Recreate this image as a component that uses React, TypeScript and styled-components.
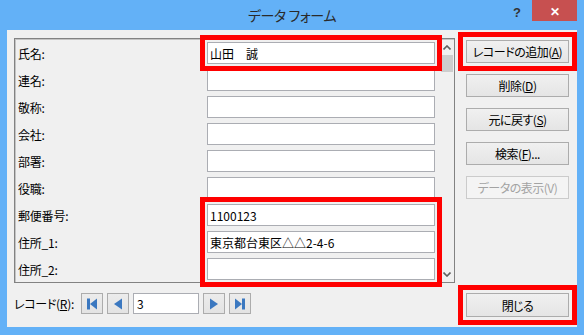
import styled, { createGlobalStyle } from 'styled-components';

const GlobalStyle = createGlobalStyle`
  html, body {
    margin: 0;
    padding: 0;
    background: #ffffff;
  }
  body {
    font-family: "Noto Sans CJK JP", "Noto Sans", sans-serif;
    font-size: 12px;
    font-feature-settings: "palt";
    color: #000000;
  }
`;

type Field = { label: string; value: string };

const fields: Field[] = [
  { label: '氏名:', value: '山田　誠' },
  { label: '連名:', value: '' },
  { label: '敬称:', value: '' },
  { label: '会社:', value: '' },
  { label: '部署:', value: '' },
  { label: '役職:', value: '' },
  { label: '郵便番号:', value: '1100123' },
  { label: '住所_1:', value: '東京都台東区△△2-4-6' },
  { label: '住所_2:', value: '' },
];

const Chevron = ({ up }: { up?: boolean }) => (
  <svg width="8" height="5" viewBox="0 0 8 5">
    <path
      d={up ? 'M0.5 4.5 L4 1 L7.5 4.5' : 'M0.5 0.5 L4 4 L7.5 0.5'}
      fill="none"
      stroke="#606060"
      strokeWidth="1.6"
    />
  </svg>
);

const NavIcon = ({ kind }: { kind: 'first' | 'prev' | 'next' | 'last' }) => (
  <svg width="12" height="12" viewBox="0 0 12 12">
    {kind === 'first' && (
      <>
        <rect x="1" y="0.5" width="3" height="11" fill="#3b78c0" />
        <path d="M4 6 L11 0.5 L11 11.5 Z" fill="#3b78c0" />
      </>
    )}
    {kind === 'prev' && <path d="M2 6 L10 0.5 L10 11.5 Z" fill="#3b78c0" />}
    {kind === 'next' && <path d="M10 6 L2 0.5 L2 11.5 Z" fill="#3b78c0" />}
    {kind === 'last' && (
      <>
        <path d="M8 6 L1 0.5 L1 11.5 Z" fill="#3b78c0" />
        <rect x="8" y="0.5" width="3" height="11" fill="#3b78c0" />
      </>
    )}
  </svg>
);

export default function App() {
  return (
    <>
      <GlobalStyle />
      <Window>
        <TitleBar>
          <span />
          <Title>データ フォーム</Title>
          <Controls>
            <Help>?</Help>
            <CloseBox>✕</CloseBox>
          </Controls>
        </TitleBar>
        <Client>
          <LeftColumn>
            <Panel>
              <Fields>
                {fields.map((f, i) => (
                  <Row key={f.label}>
                    <Label $row={i + 1}>{f.label}</Label>
                    <TextBox readOnly value={f.value} $row={i + 1} $marked={i === 0} />
                  </Row>
                ))}
                <GroupMark />
              </Fields>
              <ScrollBar>
                <ArrowCell>
                  <Chevron up />
                </ArrowCell>
                <Thumb />
                <Track />
                <ArrowCell>
                  <Chevron />
                </ArrowCell>
              </ScrollBar>
            </Panel>
            <NavBar>
              <NavLabel>
                レコード(<u>R</u>):
              </NavLabel>
              <NavButton>
                <NavIcon kind="first" />
              </NavButton>
              <NavButton>
                <NavIcon kind="prev" />
              </NavButton>
              <RecordBox readOnly value="3" />
              <NavButton>
                <NavIcon kind="next" />
              </NavButton>
              <NavButton>
                <NavIcon kind="last" />
              </NavButton>
            </NavBar>
          </LeftColumn>
          <RightColumn>
            <Button $marked>
              レコードの追加(<u>A</u>)
            </Button>
            <Button>
              削除(<u>D</u>)
            </Button>
            <Button>
              元に戻す(<u>S</u>)
            </Button>
            <Button>
              検索(<u>F</u>)...
            </Button>
            <Button disabled>データの表示(V)</Button>
            <CloseButton $marked>閉じる</CloseButton>
          </RightColumn>
        </Client>
      </Window>
    </>
  );
}

const Window = styled.div`
  width: 584px;
  height: 335px;
  background: #63b1f7;
  display: flex;
  flex-direction: column;
  box-sizing: border-box;
`;

const TitleBar = styled.div`
  height: 30px;
  display: grid;
  grid-template-columns: 1fr auto 1fr;
  align-items: start;
`;

const Title = styled.div`
  font-size: 14px;
  color: #2a2a2a;
  line-height: 30px;
  letter-spacing: -0.4px;
`;

const Controls = styled.div`
  justify-self: end;
  display: flex;
  align-items: flex-start;
  margin-right: 7px;
`;

const Help = styled.div`
  font-family: "Liberation Sans", sans-serif;
  font-weight: bold;
  font-size: 13px;
  color: #333333;
  margin-top: 5px;
  margin-right: 11px;
`;

const CloseBox = styled.div`
  width: 45px;
  height: 21px;
  background: #c75050;
  color: #ffffff;
  font-size: 12px;
  font-weight: bold;
  display: flex;
  align-items: center;
  justify-content: center;
`;

const Client = styled.div`
  flex: 1;
  margin: 0 7px 8px 7px;
  background: #f0f0f0;
  display: flex;
  gap: 11px;
  padding: 8px 8px 0 7px;
`;

const LeftColumn = styled.div`
  width: 441px;
  display: flex;
  flex-direction: column;
`;

const Panel = styled.div`
  height: 245px;
  box-sizing: border-box;
  border: 1px solid #828282;
  box-shadow: inset 1px 1px 0 #c4c4c4;
  display: flex;
`;

const Fields = styled.div`
  flex: 1;
  display: grid;
  grid-template-columns: 189px 228px;
  grid-auto-rows: 22px;
  row-gap: 5px;
  padding: 3px 0 0 3px;
  align-content: start;
`;

const Row = styled.div`
  display: contents;
`;

const Label = styled.div<{ $row: number }>`
  grid-column: 1;
  grid-row: ${(p) => p.$row};
  display: flex;
  align-items: center;
  font-size: 12px;
  letter-spacing: -0.2px;
`;

const TextBox = styled.input<{ $marked?: boolean; $row: number }>`
  grid-column: 2;
  grid-row: ${(p) => p.$row};
  box-sizing: border-box;
  width: 228px;
  height: 22px;
  margin: 0;
  border: 1px solid #abadb3;
  background: #ffffff;
  padding: 0 2px;
  font: inherit;
  font-size: 12px;
  color: #000000;
  outline: ${(p) => (p.$marked ? '5px solid #ff0000' : 'none')};
  outline-offset: 2px;
  position: relative;
  z-index: ${(p) => (p.$marked ? 2 : 0)};
`;

const GroupMark = styled.div`
  grid-column: 2;
  grid-row: 7 / span 3;
  outline: 5px solid #ff0000;
  outline-offset: 2px;
  pointer-events: none;
  position: relative;
  z-index: 2;
`;

const ScrollBar = styled.div`
  width: 14px;
  margin-left: 5px;
  display: flex;
  flex-direction: column;
  align-items: center;
`;

const ArrowCell = styled.div`
  height: 16px;
  display: flex;
  align-items: center;
  justify-content: center;
`;

const Thumb = styled.div`
  width: 12px;
  height: 17px;
  background: #cdcdcd;
`;

const Track = styled.div`
  flex: 1;
`;

const NavBar = styled.div`
  margin-top: 10px;
  display: flex;
  align-items: center;
  gap: 4px;
`;

const NavLabel = styled.div`
  width: 63px;
  font-size: 12px;
  letter-spacing: -0.3px;
`;

const NavButton = styled.div`
  width: 22px;
  height: 21px;
  box-sizing: border-box;
  border: 1px solid #acacac;
  background: linear-gradient(#ececec, #e3e3e3);
  display: flex;
  align-items: center;
  justify-content: center;
`;

const RecordBox = styled.input`
  box-sizing: border-box;
  width: 66px;
  height: 21px;
  margin: 0;
  border: 1px solid #abadb3;
  background: #ffffff;
  padding: 0 3px;
  font: inherit;
  font-size: 12px;
  outline: none;
`;

const RightColumn = styled.div`
  width: 103px;
  display: flex;
  flex-direction: column;
  padding-top: 2px;
  gap: 11px;
`;

const Button = styled.button<{ $marked?: boolean }>`
  box-sizing: border-box;
  width: 103px;
  height: 23px;
  margin: 0;
  padding: 0;
  border: 1px solid ${(p) => (p.disabled ? '#cbcbcb' : '#acacac')};
  background: ${(p) => (p.disabled ? '#f4f4f4' : 'linear-gradient(#f0f0f0, #e5e5e5)')};
  color: ${(p) => (p.disabled ? '#a3a3a3' : '#000000')};
  font: inherit;
  font-size: 12px;
  letter-spacing: -0.5px;
  outline: ${(p) => (p.$marked ? '5px solid #ff0000' : 'none')};
  outline-offset: 3px;
  position: relative;
  z-index: ${(p) => (p.$marked ? 2 : 0)};
`;

const CloseButton = styled(Button)`
  height: 24px;
  margin-top: auto;
  margin-bottom: 10px;
`;
